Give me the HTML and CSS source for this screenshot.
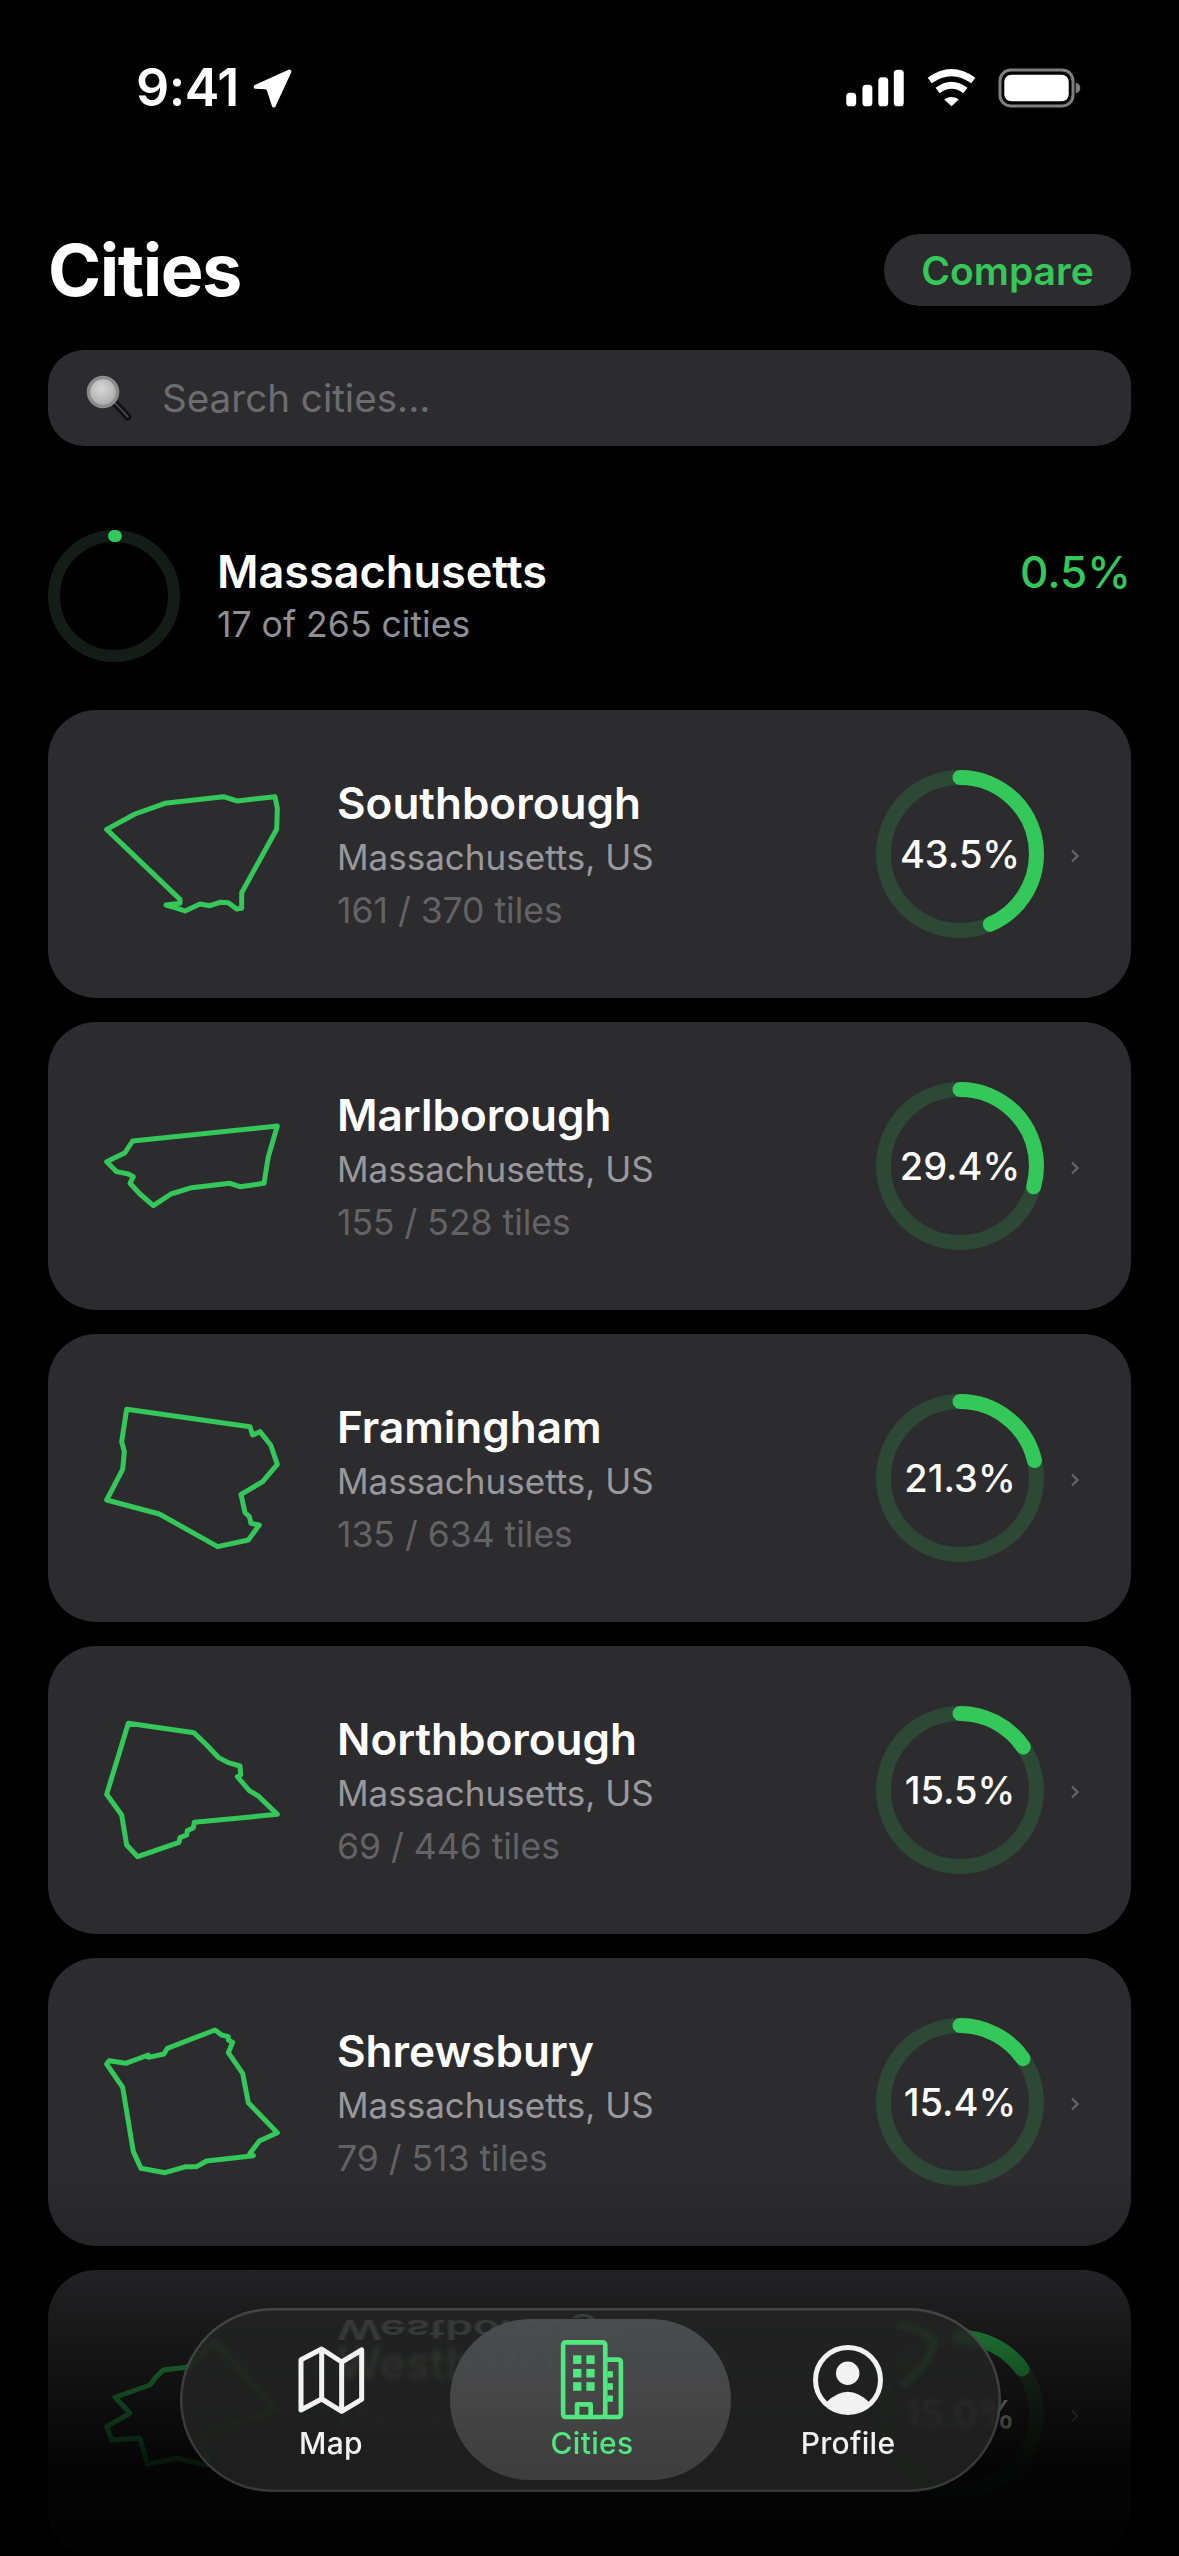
FILE: index.html
```html
<!DOCTYPE html>
<html lang="en">
<head>
<meta charset="utf-8">
<title>Cities</title>
<link rel="stylesheet" href="styles.css">
</head>
<body>
<div class="screen">
  <div class="status">
    <div class="status-left">
      <span class="time">9:41</span>
      <svg class="loc" viewBox="450 86 118 118"><path d="M458 140 L560 94 L513 196 L498 150 Q496 142 488 141 Z" fill="#fff" stroke="#fff" stroke-width="12" stroke-linejoin="round"/></svg>
    </div>
    <div class="status-right">
      <svg class="signal" viewBox="75 55 180 115" fill="#fff">
        <rect x="78" y="127" width="30" height="41" rx="11"/><rect x="127" y="103" width="30" height="65" rx="11"/><rect x="175" y="80" width="30" height="88" rx="11"/><rect x="222" y="57" width="30" height="111" rx="11"/>
      </svg>
      <svg class="wifi" viewBox="318 55 154 115">
        <path d="M329 90 Q395 42 461 90" fill="none" stroke="#fff" stroke-width="21"/>
        <path d="M353 120 Q395 88 437 120" fill="none" stroke="#fff" stroke-width="21"/>
        <path d="M373 147 Q395 132 417 147 L395 168 Z" fill="#fff"/>
      </svg>
      <svg class="battery" viewBox="535 55 250 120">
        <rect x="541" y="61" width="220" height="108" rx="32" fill="none" stroke="#808080" stroke-width="9"/>
        <rect x="554" y="75" width="194" height="80" rx="21" fill="#fff"/>
        <path d="M769 99 Q783 103 783 115 Q783 127 769 131 Z" fill="#808080"/>
      </svg>
    </div>
  </div>

  <header class="head">
    <h1 class="title">Cities</h1>
    <button class="compare">Compare</button>
  </header>

  <div class="search">
    <svg class="lens" viewBox="0 0 48 46">
      <defs><radialGradient id="glass" cx="45%" cy="40%" r="60%"><stop offset="0" stop-color="#d8d8d8"/><stop offset="1" stop-color="#a9a9a9"/></radialGradient></defs>
      <path d="M30 28 L43 42" stroke="#111" stroke-width="7" stroke-linecap="round"/>
      <path d="M30 28 L43 42" stroke="#555" stroke-width="1.5" stroke-linecap="round"/>
      <circle cx="18" cy="17" r="14.5" fill="url(#glass)" stroke="#8c8c8c" stroke-width="3.5"/>
    </svg>
    <span class="placeholder">Search cities...</span>
  </div>

  <section class="summary">
    <svg class="state-ring" viewBox="0 0 132 132">
      <circle cx="66" cy="66" r="60" fill="none" stroke="#131c17" stroke-width="12"/>
      <circle class="arc" cx="66" cy="66" r="60" fill="none" stroke="#34c759" stroke-width="12" stroke-linecap="round" pathLength="100" stroke-dasharray="0.5 200"/>
    </svg>
    <div class="state-text">
      <div class="state-name">Massachusetts</div>
      <div class="state-sub">17 of 265 cities</div>
    </div>
    <div class="state-pct">0.5%</div>
  </section>

  <div class="list">
    <article class="card">
      <svg class="shape" viewBox="129 72 540 540"><polygon points="140,268 225,222 315,190 490,170 532,183 645,170 652,205 650,268 545,458 545,505 530,507 505,488 480,487 450,497 420,492 375,513 345,503 318,495 360,490 360,478"/></svg>
      <div class="info"><div class="name">Southborough</div><div class="sub">Massachusetts, US</div><div class="tiles">161 / 370 tiles</div></div>
      <div class="ring"><svg viewBox="0 0 168 168"><circle class="track" cx="84" cy="84" r="76.5"/><circle class="arc bar" cx="84" cy="84" r="76.5" pathLength="100" stroke-dasharray="43.5 200"/></svg><span class="pct">43.5%</span></div>
      <svg class="chev" viewBox="0 0 10 14"><path d="M2 1.5 L7.5 7 L2 12.5"/></svg>
    </article>
    <article class="card">
      <svg class="shape" viewBox="129 1008 540 540"><polygon points="218,1203 652,1158 625,1250 612,1330 540,1340 510,1330 395,1343 333,1362 280,1397 240,1362 210,1330 220,1310 205,1302 170,1295 140,1265 195,1238"/></svg>
      <div class="info"><div class="name">Marlborough</div><div class="sub">Massachusetts, US</div><div class="tiles">155 / 528 tiles</div></div>
      <div class="ring"><svg viewBox="0 0 168 168"><circle class="track" cx="84" cy="84" r="76.5"/><circle class="arc bar" cx="84" cy="84" r="76.5" pathLength="100" stroke-dasharray="29.4 200"/></svg><span class="pct">29.4%</span></div>
      <svg class="chev" viewBox="0 0 10 14"><path d="M2 1.5 L7.5 7 L2 12.5"/></svg>
    </article>
    <article class="card">
      <svg class="shape" viewBox="129 84 540 540"><polygon points="200,148 570,200 578,225 600,215 632,255 652,313 608,365 543,403 555,458 568,470 573,490 598,495 565,540 473,560 298,462 140,420 188,328 193,275 185,245"/></svg>
      <div class="info"><div class="name">Framingham</div><div class="sub">Massachusetts, US</div><div class="tiles">135 / 634 tiles</div></div>
      <div class="ring"><svg viewBox="0 0 168 168"><circle class="track" cx="84" cy="84" r="76.5"/><circle class="arc bar" cx="84" cy="84" r="76.5" pathLength="100" stroke-dasharray="21.3 200"/></svg><span class="pct">21.3%</span></div>
      <svg class="chev" viewBox="0 0 10 14"><path d="M2 1.5 L7.5 7 L2 12.5"/></svg>
    </article>
    <article class="card">
      <svg class="shape" viewBox="129 1020 540 540"><polygon points="205,1090 402,1118 440,1155 475,1192 505,1208 540,1218 542,1245 532,1250 568,1292 595,1308 652,1363 403,1387 400,1403 382,1412 380,1425 360,1433 357,1447 233,1490 200,1455 185,1365 140,1303"/></svg>
      <div class="info"><div class="name">Northborough</div><div class="sub">Massachusetts, US</div><div class="tiles">69 / 446 tiles</div></div>
      <div class="ring"><svg viewBox="0 0 168 168"><circle class="track" cx="84" cy="84" r="76.5"/><circle class="arc bar" cx="84" cy="84" r="76.5" pathLength="100" stroke-dasharray="15.5 200"/></svg><span class="pct">15.5%</span></div>
      <svg class="chev" viewBox="0 0 10 14"><path d="M2 1.5 L7.5 7 L2 12.5"/></svg>
    </article>
    <article class="card">
      <svg class="shape" viewBox="129 96 540 540"><polygon points="465,150 485,165 505,170 505,180 518,187 505,218 548,280 565,368 652,458 598,483 570,520 580,527 440,543 410,560 378,560 315,578 243,565 220,515 188,322 140,252 148,242 197,250 265,225 265,232 312,222 322,205"/></svg>
      <div class="info"><div class="name">Shrewsbury</div><div class="sub">Massachusetts, US</div><div class="tiles">79 / 513 tiles</div></div>
      <div class="ring"><svg viewBox="0 0 168 168"><circle class="track" cx="84" cy="84" r="76.5"/><circle class="arc bar" cx="84" cy="84" r="76.5" pathLength="100" stroke-dasharray="15.4 200"/></svg><span class="pct">15.4%</span></div>
      <svg class="chev" viewBox="0 0 10 14"><path d="M2 1.5 L7.5 7 L2 12.5"/></svg>
    </article>
    <article class="card">
      <svg class="shape" viewBox="129 102 540 540"><polygon points="140,410 210,370 165,322 270,285 285,265 310,240 380,232 465,155 650,360 430,430 440,525 350,505 262,522 240,445 155,450"/></svg>
      <div class="info"><div class="name">Westborough</div><div class="sub">Massachusetts, US</div><div class="tiles">68 / 453 tiles</div></div>
      <div class="ring"><svg viewBox="0 0 168 168"><circle class="track" cx="84" cy="84" r="76.5"/><circle class="arc bar" cx="84" cy="84" r="76.5" pathLength="100" stroke-dasharray="15 200"/></svg><span class="pct">15.0%</span></div>
      <svg class="chev" viewBox="0 0 10 14"><path d="M2 1.5 L7.5 7 L2 12.5"/></svg>
    </article>
  </div>

  <div class="fade"></div>

  <nav class="tabbar">
    <span class="mirror" aria-hidden="true">Westborough</span>
    <svg class="caustic" viewBox="0 0 60 70"><path d="M5 3 Q30 8 38 20 Q34 42 8 62" fill="none" stroke="#2f9a55" stroke-width="9" stroke-linecap="round"/></svg>
    <span class="active-pill"></span>
    <a class="tab">
      <span class="tab-icon">
        <svg class="ic-map" viewBox="345 160 216 216" fill="none" stroke="#f2f2f2" stroke-width="15" stroke-linejoin="round"><path d="M363 207 L425 175 L485 214 L545 178 L545 326 L485 362 L425 325 L363 358 Z M425 175 V325 M485 214 V362"/></svg>
      </span>
      <span class="tab-label">Map</span>
    </a>
    <a class="tab on">
      <span class="tab-icon">
        <svg class="ic-city" viewBox="1075 145 210 250" fill="none" stroke="#50e77f" stroke-width="14" stroke-linejoin="round">
          <rect x="1093" y="155" width="127" height="225" rx="8"/>
          <path d="M1222 207 H1258 Q1267 207 1267 216 V371 Q1267 380 1258 380 H1220"/>
          <path d="M1135 378 V342 H1176 V378"/>
          <g fill="#50e77f" stroke="none">
            <rect x="1123" y="194" width="25" height="26"/><rect x="1163" y="194" width="25" height="26"/>
            <rect x="1123" y="235" width="25" height="26"/><rect x="1163" y="235" width="25" height="26"/>
            <rect x="1123" y="275" width="25" height="26"/><rect x="1163" y="275" width="25" height="26"/>
            <rect x="1226" y="242" width="17" height="19"/><rect x="1226" y="278" width="17" height="20"/><rect x="1226" y="315" width="17" height="19"/>
          </g>
        </svg>
      </span>
      <span class="tab-label">Cities</span>
    </a>
    <a class="tab">
      <span class="tab-icon">
        <svg class="ic-user" viewBox="0 0 70 70"><circle cx="35" cy="35" r="32.5" fill="none" stroke="#f2f2f2" stroke-width="5"/><circle cx="34.7" cy="28.3" r="11.7" fill="#f2f2f2"/><path d="M13 57.5 Q35 36 56.5 57.5 A32 32 0 0 1 13 57.5 Z" fill="#f2f2f2"/></svg>
      </span>
      <span class="tab-label">Profile</span>
    </a>
  </nav>
</div>
</body>
</html>
```
FILE: styles.css
```css
* { box-sizing: border-box; }
html, body { margin: 0; padding: 0; background: #000; }
.screen {
  position: relative;
  width: 1179px;
  height: 2556px;
  overflow: hidden;
  background: #000;
  color: #fff;
  font-family: Inter, "Liberation Sans", sans-serif;
  padding: 69px 48px 0 48px;
}
.status { display: flex; justify-content: space-between; height: 38px; margin-bottom: 127px; padding: 0 50px 0 88px; }
.status-left { display: flex; align-items: center; gap: 14px; }
.time { font-size: 52px; font-weight: 600; line-height: 38px; letter-spacing: -0.5px; }
.loc { width: 39px; height: 39px; }
.status-right { display: flex; align-items: center; }
.signal { width: 60px; height: 38px; }
.wifi { width: 51px; height: 38px; margin-left: 21px; }
.battery { width: 83px; height: 40px; margin-left: 21px; }

.head { display: flex; justify-content: space-between; align-items: center; height: 72px; margin-bottom: 44px; }
.title { margin: 0; font-size: 72px; line-height: 72px; font-weight: 700; letter-spacing: -1.5px; }
.compare { height: 72px; width: 247px; padding: 0; border: 0; border-radius: 36px; background: #2c2c2e; color: #34c759; font: 600 39px Inter, sans-serif; }

.search { display: flex; align-items: center; height: 96px; border-radius: 36px; background: #2c2c2e; padding-left: 37px; margin-bottom: 84px; }
.lens { width: 48px; height: 46px; }
.placeholder { margin-left: 29px; font-size: 38.6px; color: #6c6c70; }

.summary { display: flex; height: 132px; margin-bottom: 48px; }
.state-ring { width: 132px; height: 132px; flex: none; }
.arc { transform: rotate(-90deg); transform-origin: center; }
.state-text { flex: 1; margin-left: 37px; padding-top: 15px; }
.state-name { font-size: 45px; line-height: 54px; font-weight: 600; }
.state-sub { font-size: 35.6px; line-height: 52px; color: #8e8e93; }
.state-pct { font-size: 44px; line-height: 54px; padding-top: 15px; font-weight: 500; color: #34c759; }

.list { display: flex; flex-direction: column; gap: 24px; }
.card { flex: none; display: flex; align-items: center; height: 288px; border-radius: 48px; background: #2c2c2e; padding: 0 51px 0 55px; }
.shape { width: 180px; height: 180px; flex: none; fill: none; stroke: #34c759; stroke-width: 15; stroke-linejoin: round; }
.info { flex: 1; margin-left: 54px; padding-top: 5px; }
.name { font-size: 44px; line-height: 54px; font-weight: 600; }
.sub { font-size: 35px; line-height: 54px; color: #98989d; }
.tiles { font-size: 35.5px; line-height: 54px; color: #636366; }
.ring { position: relative; width: 168px; height: 168px; flex: none; display: flex; align-items: center; justify-content: center; }
.ring svg { position: absolute; inset: 0; width: 168px; height: 168px; }
.track, .bar { fill: none; stroke-width: 15; }
.track { stroke: #2d4936; }
.bar { stroke: #34c759; stroke-linecap: round; }
.pct { position: relative; font-size: 38px; font-weight: 500; }
.chev { width: 10px; height: 14px; margin: 3px 0 0 26px; flex: none; fill: none; stroke: #636366; stroke-width: 2.4; }

.fade {
  position: absolute; left: 0; right: 0; top: 2170px; bottom: 0;
  background: linear-gradient(to bottom, rgba(0,0,0,0) 0, rgba(0,0,0,.2) 100px, rgba(0,0,0,.38) 140px, rgba(0,0,0,.68) 230px, rgba(0,0,0,.88) 290px, rgba(0,0,0,.95) 386px);
}
.tabbar {
  position: absolute; left: 180px; top: 2308px; width: 821px; height: 184px;
  border-radius: 92px;
  overflow: hidden;
  display: grid; grid-template-columns: 262px 260px 252px;
  padding: 30px 0 0 20px;
  background: rgba(34,36,35,.84);
  -webkit-backdrop-filter: blur(2.5px);
  backdrop-filter: blur(2.5px);
  box-shadow: inset 0 0 0 2.5px rgba(255,255,255,.12), inset 0 2px 3px rgba(255,255,255,.07);
}
.mirror {
  position: absolute; left: 157px; top: -5px;
  font-size: 44px; font-weight: 600; line-height: 54px;
  color: rgba(255,255,255,.11);
  transform: scaleY(-.62);
  filter: blur(1px);
}
.caustic {
  position: absolute; left: 716px; top: 14px; width: 60px; height: 70px;
  opacity: .1;
  filter: blur(2px);
}
.active-pill {
  position: absolute; left: 270px; top: 11px; width: 281px; height: 161px;
  border-radius: 80px;
  background: linear-gradient(to bottom, rgba(78,79,81,.92), rgba(72,72,73,.94) 50%, rgba(64,64,65,.92));
}
.tab { position: relative; display: flex; flex-direction: column; align-items: center; color: #f2f2f2; }
.tab.on { color: #50e77f; }
.tab-icon { height: 84px; display: flex; align-items: center; justify-content: center; }
.ic-map { width: 72px; height: 72px; }
.ic-city { width: 70px; height: 83px; }
.ic-user { width: 70px; height: 70px; }
.tab-label { margin-top: 6px; font-size: 30px; line-height: 30px; font-weight: 500; letter-spacing: .3px; }
```
